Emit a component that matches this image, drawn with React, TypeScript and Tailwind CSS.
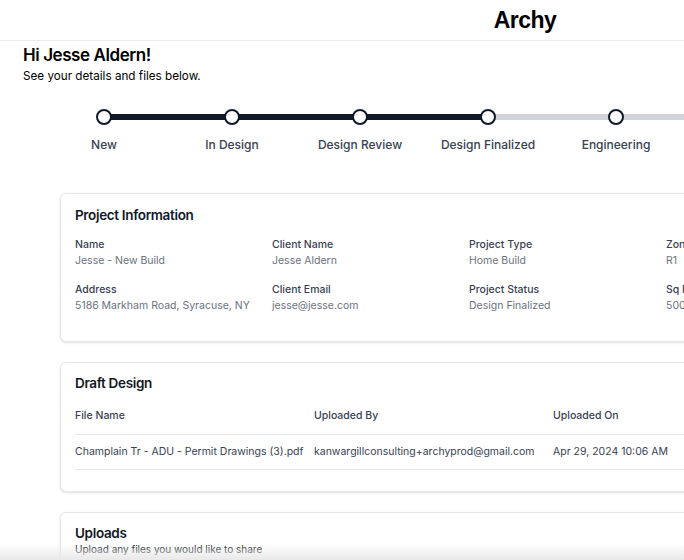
const steps = [
  { name: "New", done: true },
  { name: "In Design", done: true },
  { name: "Design Review", done: true },
  { name: "Design Finalized", done: true },
  { name: "Engineering", done: false },
  { name: "Permitting", done: false },
  { name: "Construction", done: false },
  { name: "Complete", done: false },
]

const info = [
  { label: "Name", value: "Jesse - New Build" },
  { label: "Client Name", value: "Jesse Aldern" },
  { label: "Project Type", value: "Home Build" },
  { label: "Zoning", value: "R1" },
  { label: "Address", value: "5186 Markham Road, Syracuse, NY" },
  { label: "Client Email", value: "jesse@jesse.com" },
  { label: "Project Status", value: "Design Finalized" },
  { label: "Sq Ft", value: "5000" },
]

function Stepper() {
  return (
    <div className="flex pl-[40px] pt-[25px]">
      {steps.map((step, i) => (
        <div key={step.name} className="relative flex w-[128px] shrink-0 flex-col items-center">
          {i < steps.length - 1 && (
            <div
              className={`absolute left-[64px] top-[5px] h-[6px] w-[128px] ${
                step.done && steps[i + 1].done ? "bg-[#111827]" : "bg-[#d1d5db]"
              }`}
            />
          )}
          <div className="relative z-10 h-[16px] w-[16px] rounded-full border-2 border-[#111827] bg-white" />
          <span className="mt-[12px] whitespace-nowrap text-[12px] leading-[16px] font-medium text-[#374151]">
            {step.name}
          </span>
        </div>
      ))}
    </div>
  )
}

export default function App() {
  return (
    <div className="relative h-[560px] w-[684px] overflow-hidden bg-white font-['Inter',sans-serif] text-[#111827]">
      <div className="w-[1050px]">
        {/* Header */}
        <header className="flex h-[41px] items-center justify-center border-b border-[#ececec]">
          <h1 className="font-['Liberation_Sans',sans-serif] text-[23px] font-bold tracking-tight text-black">Archy</h1>
        </header>

        <div className="px-[23px] pt-[4px]">
          <h2 className="text-[17px] leading-[20px] font-semibold tracking-tight text-black">Hi Jesse Aldern!</h2>
          <p className="mt-[3px] text-[11.7px] leading-[16px] text-black">See your details and files below.</p>
        </div>

        <Stepper />

        <div className="mx-[60px] mt-[40px] flex flex-col gap-[20px]">
          {/* Project Information */}
          <div className="h-[149px] rounded-md border border-[#e5e7eb] bg-white px-[14px] pt-[11px] shadow-sm">
            <h3 className="text-[13.5px] leading-[20px] font-semibold tracking-tight">Project Information</h3>
            <div className="mt-[13px] grid grid-cols-[197px_197px_197px_197px] gap-y-[15px]">
              {info.map((item) => (
                <div key={item.label}>
                  <div className="whitespace-nowrap text-[10.5px] leading-[14px] font-medium text-[#374151]">
                    {item.label}
                  </div>
                  <div className="mt-[2px] whitespace-nowrap text-[10.5px] leading-[14px] text-[#6b7280]">
                    {item.value}
                  </div>
                </div>
              ))}
            </div>
          </div>

          {/* Draft Design */}
          <div className="h-[130px] rounded-md border border-[#e5e7eb] bg-white px-[14px] pt-[10px] shadow-sm">
            <h3 className="text-[13.5px] leading-[20px] font-semibold tracking-tight">Draft Design</h3>
            <div className="mt-[16px] text-[10.5px] leading-[14px]">
              <div className="grid grid-cols-[239px_239px_239px] pb-[11px] font-medium text-[#374151]">
                <div>File Name</div>
                <div>Uploaded By</div>
                <div>Uploaded On</div>
              </div>
              <div className="grid grid-cols-[239px_239px_239px] whitespace-nowrap border-y border-[#e5e7eb] pt-[10px] pb-[10px] text-[#374151]">
                <div>Champlain Tr - ADU - Permit Drawings (3).pdf</div>
                <div>kanwargillconsulting+archyprod@gmail.com</div>
                <div>Apr 29, 2024 10:06 AM</div>
              </div>
            </div>
          </div>

          {/* Uploads */}
          <div className="h-[120px] rounded-md border border-[#e5e7eb] bg-white px-[14px] pt-[10px] shadow-sm">
            <h3 className="text-[13.5px] leading-[20px] font-semibold tracking-tight">Uploads</h3>
            <p className="text-[10px] leading-[12px] text-[#111827]">Upload any files you would like to share</p>
          </div>
        </div>
      </div>

      {/* bottom fade */}
      <div className="pointer-events-none absolute bottom-0 left-0 h-[16px] w-full bg-gradient-to-b from-transparent to-[#e8e8e8]" />
    </div>
  )
}
